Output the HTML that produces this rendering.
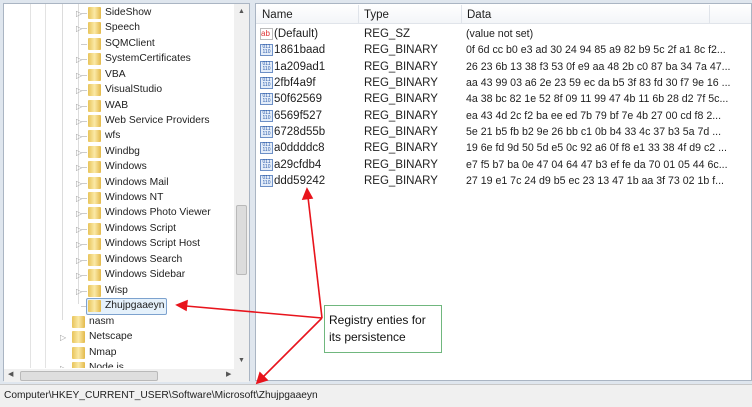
<!DOCTYPE html><html><head><style>
*{margin:0;padding:0;box-sizing:border-box}
body{width:752px;height:407px;overflow:hidden;background:#dfe6ee;font-family:"Liberation Sans",sans-serif;font-size:11.5px;color:#1e1e1e;position:relative}
.a{position:absolute;white-space:nowrap}
.tr{font-size:10.3px}
.f{position:absolute;width:13px;height:12px;background:linear-gradient(90deg,#e8c45a,#fbe9a6 50%,#e3b94a);border-radius:1px}
.t{position:absolute;font-size:8px;color:#999}
.ic{position:absolute;width:13px;height:12px;border:1px solid #6c8fc6;background:#e4edf9;font-size:5px;color:#2a59a8;line-height:5px;text-align:center}
</style></head><body>
<div class="a" style="left:3px;top:3px;width:247px;height:378px;background:#fff;border:1px solid #aab5c3"></div>
<div class="a" style="left:30px;top:4px;width:1px;height:364px;background:#e3e3e3"></div>
<div class="a" style="left:45px;top:4px;width:1px;height:364px;background:#e3e3e3"></div>
<div class="a" style="left:62px;top:4px;width:1px;height:316px;background:#dcdcdc"></div>
<div class="a" style="left:78px;top:4px;width:1px;height:300px;background:#dcdcdc"></div>
<div class="a" style="left:234px;top:4px;width:15px;height:365px;background:#f0f0f0"></div>
<div class="a" style="left:236px;top:205px;width:11px;height:70px;background:#dcdcdc;border:1px solid #b9b9b9;border-radius:2px"></div>
<div class="a" style="left:238px;top:8px;font-size:7px;color:#555">▲</div>
<div class="a" style="left:238px;top:357px;font-size:7px;color:#555">▼</div>
<div class="a" style="left:4px;top:369px;width:245px;height:13px;background:#f0f0f0"></div>
<div class="a" style="left:20px;top:371px;width:138px;height:10px;background:#dedede;border:1px solid #b9b9b9;border-radius:2px"></div>
<div class="a" style="left:8px;top:370px;font-size:7px;color:#555">◀</div>
<div class="a" style="left:226px;top:370px;font-size:7px;color:#555">▶</div>
<div id="tree"></div>
<div class="a" style="left:255px;top:3px;width:497px;height:378px;background:#fff;border:1px solid #aab5c3"></div>
<div class="a" style="left:256px;top:4px;width:495px;height:20px;background:linear-gradient(#fff,#f3f5f8);border-bottom:1px solid #e0e4ea"></div>
<div class="a" style="left:358px;top:5px;width:1px;height:19px;background:#e0e4ea"></div>
<div class="a" style="left:461px;top:5px;width:1px;height:19px;background:#e0e4ea"></div>
<div class="a" style="left:709px;top:5px;width:1px;height:19px;background:#e0e4ea"></div>
<div class="a" style="left:262px;top:9px">Name</div>
<div class="a" style="left:364px;top:9px">Type</div>
<div class="a" style="left:467px;top:9px">Data</div>
<div id="vals"></div>
<div class="a" style="left:0;top:384px;width:752px;height:23px;background:#f0f0f0;border-top:1px solid #c8c8c8"></div>
<div class="a" style="left:4px;top:390px;font-size:10.2px">Computer\HKEY_CURRENT_USER\Software\Microsoft\Zhujpgaaeyn</div>
<div class="a" style="left:324px;top:305px;width:118px;height:48px;background:#fff;border:1px solid #70b77e"></div>
<div class="a" style="left:329px;top:312px;font-size:12px;line-height:17px;color:#111">Registry enties for<br>its persistence</div>
<svg class="a" style="left:0;top:0" width="752" height="407"><g stroke="#e8141c" stroke-width="1.6" fill="#e8141c">
<line x1="322" y1="318" x2="308" y2="197"/><polygon points="307,189 303,199 312,198"/>
<line x1="322" y1="318" x2="186" y2="306"/><polygon points="177,305 187,301 186,310"/>
<line x1="322" y1="318" x2="263" y2="377"/><polygon points="257,383 260,373 267,380"/>
</g></svg>
<script>
var L2=["SideShow","Speech","SQMClient","SystemCertificates","VBA","VisualStudio","WAB","Web Service Providers","wfs","Windbg","Windows","Windows Mail","Windows NT","Windows Photo Viewer","Windows Script","Windows Script Host","Windows Search","Windows Sidebar","Wisp","Zhujpgaaeyn"];
var h="";
L2.forEach(function(n,i){var y=7+i*15.42;
if(n!="SQMClient"&&n!="Zhujpgaaeyn")h+='<div class="t" style="left:76px;top:'+(y+2)+'px">▷</div>';
h+='<div class="a" style="left:81px;top:'+(y+6)+'px;width:6px;height:1px;background:#ccc"></div>';
if(n=="Zhujpgaaeyn")h+='<div class="a" style="left:86px;top:'+(y-2)+'px;width:81px;height:17px;background:#e5f1fb;border:1px solid #7da2ce;border-radius:2px"></div>';
h+='<div class="f" style="left:88px;top:'+y+'px"></div><div class="a tr" style="left:105px;top:'+(y)+'px">'+n+'</div>';});
["nasm","Netscape","Nmap","Node.js"].forEach(function(n,i){var y=316+i*15.42;
if(n!="nasm"&&n!="Nmap")h+='<div class="t" style="left:60px;top:'+(y+2)+'px">▷</div>';
h+='<div class="f" style="left:72px;top:'+y+'px"></div><div class="a tr" style="left:89px;top:'+y+'px">'+n+'</div>';});
document.getElementById("tree").outerHTML='<div style="position:absolute;left:0;top:0;width:234px;height:368px;overflow:hidden">'+h+'</div>';
var V=[["(Default)","REG_SZ","(value not set)"],["1861baad","REG_BINARY","0f 6d cc b0 e3 ad 30 24 94 85 a9 82 b9 5c 2f a1 8c f2..."],["1a209ad1","REG_BINARY","26 23 6b 13 38 f3 53 0f e9 aa 48 2b c0 87 ba 34 7a 47..."],["2fbf4a9f","REG_BINARY","aa 43 99 03 a6 2e 23 59 ec da b5 3f 83 fd 30 f7 9e 16 ..."],["50f62569","REG_BINARY","4a 38 bc 82 1e 52 8f 09 11 99 47 4b 11 6b 28 d2 7f 5c..."],["6569f527","REG_BINARY","ea 43 4d 2c f2 ba ee ed 7b 79 bf 7e 4b 27 00 cd f8 2..."],["6728d55b","REG_BINARY","5e 21 b5 fb b2 9e 26 bb c1 0b b4 33 4c 37 b3 5a 7d ..."],["a0ddddc8","REG_BINARY","19 6e fd 9d 50 5d e5 0c 92 a6 0f f8 e1 33 38 4f d9 c2 ..."],["a29cfdb4","REG_BINARY","e7 f5 b7 ba 0e 47 04 64 47 b3 ef fe da 70 01 05 44 6c..."],["ddd59242","REG_BINARY","27 19 e1 7c 24 d9 b5 ec 23 13 47 1b aa 3f 73 02 1b f..."]];
var s="";V.forEach(function(r,i){var y=28+i*16.33;
s+=(i==0?'<div class="a" style="left:260px;top:'+(y)+'px;width:13px;height:12px;border:1px solid #bbb;color:#d33;font-size:8px;line-height:10px;background:#fff">ab</div>':'<div class="ic" style="left:260px;top:'+y+'px">011<br>110</div>');
s+='<div class="a" style="left:274px;top:'+y+'px">'+r[0]+'</div><div class="a" style="left:364px;top:'+y+'px">'+r[1]+'</div><div class="a" style="left:466px;top:'+y+'px;font-size:10.6px">'+r[2]+'</div>';});
document.getElementById("vals").outerHTML=s;
</script>
</body></html>
